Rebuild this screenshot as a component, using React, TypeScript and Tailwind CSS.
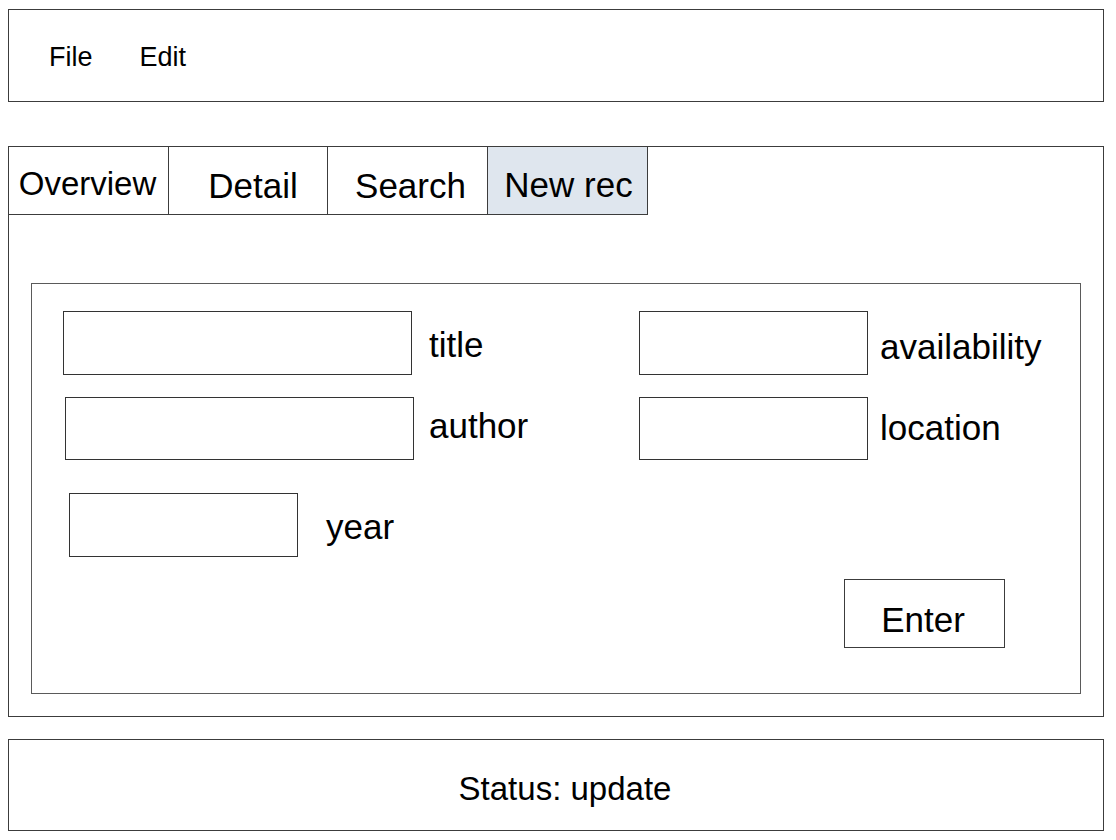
import type { ReactNode } from "react";

const tabs = [
  { label: "Overview", w: "w-[160px]", text: "text-[33px] pt-[7px] pr-[2px]", active: false },
  { label: "Detail", w: "w-[159px]", text: "text-[35px] pt-[10px] pl-[10px]", active: false },
  { label: "Search", w: "w-[160px]", text: "text-[35px] pt-[10px] pl-[6px]", active: false },
  { label: "New rec", w: "w-[160px]", text: "text-[35px] pt-[9px] pl-[2px]", active: true },
];

function Field({ width, className = "" }: { width: string; className?: string }) {
  return <input className={`h-full border border-[#333] bg-white ${width} ${className}`} type="text" />;
}

function Label({ children, className = "" }: { children: ReactNode; className?: string }) {
  return <span className={`text-[35px] leading-[40px] text-black ${className}`}>{children}</span>;
}

export default function App() {
  return (
    <div className="flex h-[840px] flex-col bg-white px-[8px] pt-[9px] font-['Liberation_Sans',Arial,sans-serif] text-black">
      {/* menu bar */}
      <div className="flex h-[93px] w-[1096px] items-center gap-[47px] border border-[#3c3c3c] pl-[40px] pt-[4px] text-[27px]">
        <span>File</span>
        <span>Edit</span>
      </div>

      {/* tab panel */}
      <div className="mt-[44px] flex h-[571px] w-[1096px] flex-col border border-[#3c3c3c]">
        <div className="flex h-[68px]">
          {tabs.map((tab) => (
            <div
              key={tab.label}
              className={`flex items-center justify-center border-r border-b border-[#3c3c3c] ${tab.w} ${
                tab.active ? "bg-[#dfe6ee]" : "bg-white"
              }`}
            >
              <span className={`leading-[40px] ${tab.text}`}>{tab.label}</span>
            </div>
          ))}
        </div>

        <div className="mx-[22px] mt-[68px] flex h-[411px] flex-col border border-[#5a5a5a] pt-[27px]">
          <div className="flex h-[64px]">
            <div className="flex w-[607px] items-center">
              <Field width="w-[349px]" className="ml-[31px]" />
              <Label className="ml-[17px] pt-[4px]">title</Label>
            </div>
            <div className="flex items-center">
              <Field width="w-[229px]" />
              <Label className="ml-[12px] pt-[8px]">availability</Label>
            </div>
          </div>

          <div className="mt-[22px] flex h-[63px]">
            <div className="flex w-[607px] items-center">
              <Field width="w-[349px]" className="ml-[33px]" />
              <Label className="ml-[15px] pb-[5px]">author</Label>
            </div>
            <div className="flex items-center">
              <Field width="w-[229px]" />
              <Label className="ml-[12px] pb-[2px]">location</Label>
            </div>
          </div>

          <div className="mt-[33px] flex h-[64px] items-center">
            <Field width="w-[229px]" className="ml-[37px]" />
            <Label className="ml-[28px] pt-[4px]">year</Label>
          </div>

          <div className="mt-[22px] flex">
            <button className="ml-[812px] flex h-[69px] w-[161px] items-center justify-center border border-[#3c3c3c] bg-white pt-[12px] pr-[3px] text-[35px] leading-[40px]">
              Enter
            </button>
          </div>
        </div>
      </div>

      {/* status bar */}
      <div className="mt-[22px] flex h-[92px] w-[1096px] items-center justify-center border border-[#3c3c3c] pl-[18px] pt-[8px] text-[33px]">
        Status: update
      </div>
    </div>
  );
}
